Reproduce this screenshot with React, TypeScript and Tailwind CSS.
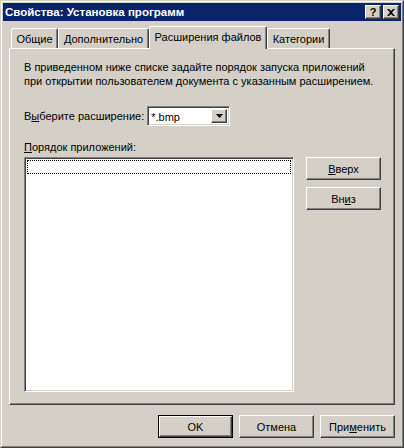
import React from "react";

const font = { fontFamily: '"Liberation Sans", Arial, sans-serif' };

const raised =
  "border border-t-white border-l-white border-r-[#404040] border-b-[#404040] shadow-[inset_-1px_-1px_0_#808080]";
const sunken =
  "border border-t-[#808080] border-l-[#808080] border-r-white border-b-white shadow-[inset_1px_1px_0_#404040,inset_-1px_-1px_0_#d4d0c8]";

function Btn({ children, wide = 75, def = false }: { children: React.ReactNode; wide?: number; def?: boolean }) {
  const inner = (
    <div className={`${raised} h-full w-full flex items-center justify-center bg-[#d4d0c8] text-black`}>{children}</div>
  );
  if (def) {
    return (
      <div className="border border-black h-[23px]" style={{ width: wide }}>
        {inner}
      </div>
    );
  }
  return (
    <div className="h-[23px]" style={{ width: wide }}>
      {inner}
    </div>
  );
}

function Tab({ label, w, active = false }: { label: string; w: number; active?: boolean }) {
  return (
    <div
      className={
        active
          ? "relative z-10 h-[23px] mb-[-1px] bg-[#d4d0c8] border-l border-t border-l-white border-t-white border-r border-r-[#404040] shadow-[inset_-1px_0_0_#808080] rounded-t-[2px] flex items-start justify-center pt-[3px]"
          : "h-[20px] bg-[#d4d0c8] border-l border-t border-l-white border-t-white border-r border-r-[#404040] shadow-[inset_-1px_0_0_#808080] rounded-t-[2px] flex items-start justify-center pt-[3px]"
      }
      style={{ width: w }}
    >
      {label}
    </div>
  );
}

export default function App() {
  return (
    <div
      className="w-[404px] h-[448px] border border-t-[#d4d0c8] border-l-[#d4d0c8] border-r-[#404040] border-b-[#404040] text-[11px] leading-[14px] text-black"
      style={font}
    >
      <div className="h-full border border-t-white border-l-white border-r-[#808080] border-b-[#808080] bg-[#d4d0c8] p-[1px] flex flex-col">
        {/* title bar */}
        <div className="h-[18px] bg-[#0a246a] flex items-center pl-[2px] pr-[2px]">
          <span className="text-white font-bold text-[11.5px]">Свойства: Установка программ</span>
          <div className="ml-auto flex gap-[2px]">
            <div className={`${raised} w-[16px] h-[14px] bg-[#d4d0c8] flex items-center justify-center font-bold text-[11px] leading-none`}>
              ?
            </div>
            <div className={`${raised} w-[16px] h-[14px] bg-[#d4d0c8] flex items-center justify-center`}>
              <svg width="8" height="7" viewBox="0 0 8 7">
                <path d="M0 0h2l2 2 2-2h2L5 3.5 8 7H6L4 5 2 7H0l3-3.5z" fill="#000" />
              </svg>
            </div>
          </div>
        </div>

        {/* tabs */}
        <div className="pt-[5px] pl-[6px]">
          <div className="flex items-end pl-[2px]">
            <Tab label="Общие" w={47} />
            <Tab label="Дополнительно" w={91} />
            <Tab label="Расширения файлов" w={118} active />
            <Tab label="Категории" w={63} />
          </div>
          <div className="w-[386px] h-[357px] border border-t-white border-l-white border-r-[#404040] border-b-[#404040] shadow-[inset_-1px_-1px_0_#808080] pl-[14px] pt-[11px]">
            <p>
              В приведенном ниже списке задайте порядок запуска приложений
              <br />
              при открытии пользователем документа с указанным расширением.
            </p>
            <div className="mt-[18px] flex items-center h-[20px]">
              <span>
                В<span className="underline underline-offset-1">ы</span>берите расширение:
              </span>
              <div className={`${sunken} ml-[3px] w-[83px] h-[20px] bg-white flex items-stretch p-[2px]`}>
                <span className="flex-1 pl-[1px] leading-[16px]">*.bmp</span>
                <div className={`${raised} w-[16px] bg-[#d4d0c8] flex items-center justify-center`}>
                  <svg width="7" height="4" viewBox="0 0 7 4">
                    <path d="M0 0h7L3.5 4z" fill="#000" />
                  </svg>
                </div>
              </div>
            </div>
            <div className="mt-[14px]">
              <span className="underline underline-offset-1">П</span>орядок приложений:
            </div>
            <div className="mt-[3px] flex">
              <div className={`${sunken} w-[270px] h-[235px] bg-white p-[2px]`}>
                <div className="h-[14px] border border-dotted border-black" />
              </div>
              <div className="ml-[12px] flex flex-col gap-[7px]">
                <Btn>
                  <span>
                    <span className="underline underline-offset-1">В</span>верх
                  </span>
                </Btn>
                <Btn>
                  <span>
                    Вн<span className="underline underline-offset-1">и</span>з
                  </span>
                </Btn>
              </div>
            </div>
          </div>
        </div>

        {/* bottom buttons */}
        <div className="mt-[10px] flex justify-end gap-[6px] pr-[6px]">
          <Btn def>OK</Btn>
          <Btn>Отмена</Btn>
          <Btn>
            <span>
              При<span className="underline underline-offset-1">м</span>енить
            </span>
          </Btn>
        </div>
      </div>
    </div>
  );
}
